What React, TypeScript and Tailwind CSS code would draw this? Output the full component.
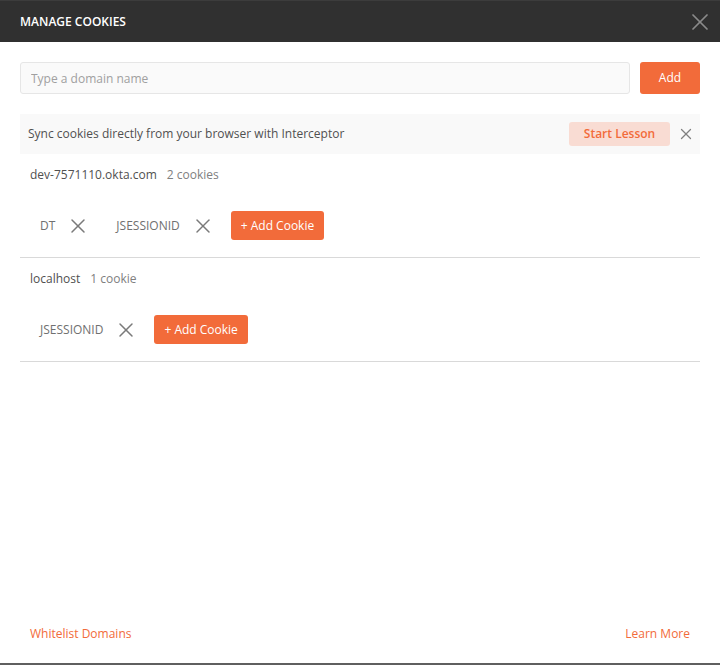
import { X } from 'lucide-react'

const font = { fontFamily: '"Open Sans", "Liberation Sans", sans-serif' }

function CookieChip({ name }: { name: string }) {
  return (
    <div className="flex h-[29px] items-center pl-[10px] pr-[6px]">
      <span className="text-[12px] text-[#707070]">{name}</span>
      <X className="ml-[11px] h-[24px] w-[24px] text-[#7a7a7a]" strokeWidth={1.5} />
    </div>
  )
}

function AddCookie() {
  return (
    <button className="h-[29px] rounded-[3px] bg-[#f26b3a] px-[10px] text-[12px] text-white">
      + Add Cookie
    </button>
  )
}

function Domain({ name, count, cookies }: { name: string; count: string; cookies: string[] }) {
  return (
    <div className="border-b border-[#d9d9d9]">
      <div className="flex h-[42px] items-center gap-[10px] px-[10px] text-[12px]">
        <span className="text-[#505050]">{name}</span>
        <span className="text-[#808080]">{count}</span>
      </div>
      <div className="flex items-center gap-[10px] px-[10px] pb-[17px] pt-[15px]">
        {cookies.map((c, i) => (
          <CookieChip key={i} name={c} />
        ))}
        <AddCookie />
      </div>
    </div>
  )
}

export default function App() {
  return (
    <div className="flex h-[665px] w-[720px] flex-col overflow-hidden bg-white" style={font}>
      <div className="flex h-[42px] shrink-0 items-center justify-between border-t border-[#3c3c3c] bg-[#303030] pl-[20px] pr-[6px]">
        <span className="text-[12px] font-semibold text-white">MANAGE COOKIES</span>
        <X className="h-[28px] w-[28px] text-[#8a8a8a]" strokeWidth={1.5} />
      </div>

      <div className="flex flex-1 flex-col px-[20px]">
        <div className="mt-[20px] flex gap-[10px]">
          <input
            placeholder="Type a domain name"
            className="h-[32px] flex-1 rounded-[3px] border border-[#e6e6e6] bg-[#fafafa] px-[10px] text-[12px] text-[#505050] outline-none placeholder:text-[#a0a0a0]"
          />
          <button className="h-[32px] w-[60px] rounded-[3px] bg-[#f26b3a] text-[12px] text-white">Add</button>
        </div>

        <div className="mt-[20px] flex h-[40px] items-center bg-[#f9f9f9] pl-[8px] pr-[5px]">
          <span className="flex-1 text-[12px] text-[#505050]">Sync cookies directly from your browser with Interceptor</span>
          <button className="h-[24px] w-[101px] rounded-[3px] bg-[#f9dcd3] text-[12px] font-semibold text-[#f26b3a]">
            Start Lesson
          </button>
          <X className="ml-[7px] h-[18px] w-[18px] text-[#808080]" strokeWidth={1.7} />
        </div>

        <Domain name="dev-7571110.okta.com" count="2 cookies" cookies={['DT', 'JSESSIONID']} />
        <Domain name="localhost" count="1 cookie" cookies={['JSESSIONID']} />

        <div className="mt-auto flex h-[38px] items-start justify-between px-[10px] text-[12px] text-[#f26b3a]">
          <span>Whitelist Domains</span>
          <span>Learn More</span>
        </div>
      </div>
      <div className="h-[2px] shrink-0 bg-[#5f5f5f]" />
    </div>
  )
}
